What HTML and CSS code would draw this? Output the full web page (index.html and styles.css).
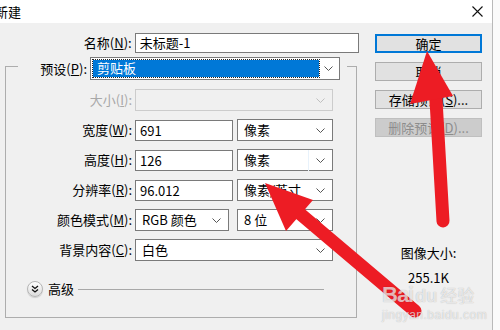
FILE: index.html
```html
<!DOCTYPE html>
<html lang="zh">
<head>
    <meta charset="UTF-8">
    <title>新建</title>
    <link rel="stylesheet" href="styles.css">
</head>
<body>

    <div class="window">
        <div class="titlebar">
            <span class="title">新建</span>
            <svg class="close" width="11" height="11" viewBox="0 0 11 11">
                <path d="M0.5 0.5 L10.5 10.5 M10.5 0.5 L0.5 10.5" stroke="#111" stroke-width="1.1" fill="none"/>
            </svg>
        </div>

        <div class="content">
            <div class="form">
                <div class="name-row">
                    <label class="lbl">名称(<u>N</u>):</label>
                    <div class="text-input wide">未标题-1</div>
                </div>

                <div class="group">
                    <div class="preset-row">
                        <label class="lbl preset-lbl">预设(<u>P</u>):</label>
                        <div class="select preset">
                            <span class="sel-focus">剪贴板</span>
                            <svg class="chev" width="9" height="5"><polyline points="0.5,0.5 4.5,4.5 8.5,0.5"/></svg>
                        </div>
                    </div>

                    <div class="row first">
                        <label class="lbl disabled">大小(<u>I</u>):</label>
                        <div class="select full off">
                            <span></span>
                            <svg class="chev" width="9" height="5"><polyline points="0.5,0.5 4.5,4.5 8.5,0.5"/></svg>
                        </div>
                    </div>

                    <div class="row">
                        <label class="lbl">宽度(<u>W</u>):</label>
                        <div class="text-input num">691</div>
                        <div class="select unit">
                            <span>像素</span>
                            <svg class="chev" width="9" height="5"><polyline points="0.5,0.5 4.5,4.5 8.5,0.5"/></svg>
                        </div>
                    </div>

                    <div class="row">
                        <label class="lbl">高度(<u>H</u>):</label>
                        <div class="text-input num">126</div>
                        <div class="select unit hover">
                            <span>像素</span>
                            <svg class="chev" width="9" height="5"><polyline points="0.5,0.5 4.5,4.5 8.5,0.5"/></svg>
                        </div>
                    </div>

                    <div class="row">
                        <label class="lbl">分辨率(<u>R</u>):</label>
                        <div class="text-input num">96.012</div>
                        <div class="select unit">
                            <span>像素/英寸</span>
                            <svg class="chev" width="9" height="5"><polyline points="0.5,0.5 4.5,4.5 8.5,0.5"/></svg>
                        </div>
                    </div>

                    <div class="row">
                        <label class="lbl">颜色模式(<u>M</u>):</label>
                        <div class="select mode">
                            <span>RGB 颜色</span>
                            <svg class="chev" width="9" height="5"><polyline points="0.5,0.5 4.5,4.5 8.5,0.5"/></svg>
                        </div>
                        <div class="select unit">
                            <span>8 位</span>
                            <svg class="chev" width="9" height="5"><polyline points="0.5,0.5 4.5,4.5 8.5,0.5"/></svg>
                        </div>
                    </div>

                    <div class="row">
                        <label class="lbl">背景内容(<u>C</u>):</label>
                        <div class="select full">
                            <span>白色</span>
                            <svg class="chev" width="9" height="5"><polyline points="0.5,0.5 4.5,4.5 8.5,0.5"/></svg>
                        </div>
                    </div>

                    <div class="advanced">
                        <span class="adv-btn">
                            <svg width="8" height="8" viewBox="0 0 8 8">
                                <polyline points="1,1 4,3.5 7,1" />
                                <polyline points="1,4.5 4,7 7,4.5" />
                            </svg>
                        </span>
                        <span class="adv-text">高级</span>
                        <span class="adv-line"></span>
                    </div>
                </div>
            </div>

            <div class="side">
                <div class="btn default">确定</div>
                <div class="btn">取消</div>
                <div class="btn">存储预设(<u>S</u>)...</div>
                <div class="btn off">删除预设(<u>D</u>)...</div>

                <div class="size-info">
                    <div>图像大小:</div>
                    <div class="size-val">255.1K</div>
                </div>
            </div>
        </div>
    </div>

    <!-- red marks drawn on top of the screenshot -->
    <svg class="marks" width="500" height="330" viewBox="0 0 500 330">
        <line x1="443" y1="221" x2="436" y2="100" stroke="#ed1c24" stroke-width="13" stroke-linecap="round"/>
        <polygon points="427,51 410,104 453,96" fill="#ed1c24"/>
        <line x1="415" y1="311" x2="298" y2="212" stroke="#ed1c24" stroke-width="13" stroke-linecap="round"/>
        <polygon points="265,183 313,200 286,231" fill="#ed1c24"/>
    </svg>

    <div class="watermark">
        <div class="wm-top"><span class="wm-bai">Bai</span><span class="wm-du">du</span><span class="wm-cn">经验</span></div>
        <div class="wm-url">jingyan.baidu.com</div>
    </div>

</body>
</html>
```

FILE: styles.css
```css
body {
    margin: 0;
    width: 500px;
    height: 330px;
    overflow: hidden;
    position: relative;
    background-color: #fafafa;
    font-family: "Noto Sans CJK SC", "Noto Sans", sans-serif;
    font-size: 13px;
    color: #000;
}
u {
    text-decoration: underline;
    text-underline-offset: 1px;
}
.window {
    width: 492px;
    height: 330px;
    background-color: #f0f0f0;
    border-right: 1px solid #b9b9b9;
}
.titlebar {
    height: 23px;
    background-color: #fff;
    display: flex;
    align-items: center;
    justify-content: space-between;
}
.title {
    margin-left: -5px;
    line-height: 16px;
}
.close {
    margin-right: 9px;
}
.content {
    display: flex;
    padding-top: 10px;
}
.form {
    width: 354px;
    padding-left: 5px;
}
.lbl {
    text-align: right;
    line-height: 16px;
    white-space: nowrap;
}
.lbl.disabled {
    color: #a8a8a8;
}
.name-row {
    display: flex;
    align-items: center;
    height: 20px;
}
.name-row .lbl {
    width: 127px;
    margin-right: 3px;
}
.text-input {
    box-sizing: border-box;
    height: 20px;
    line-height: 18px;
    padding-left: 4px;
    background-color: #fff;
    border: 1px solid #7a7a7a;
    white-space: nowrap;
}
.text-input.wide {
    width: 225px;
}
.text-input.num {
    width: 98px;
    height: 21px;
    line-height: 19px;
}
.group {
    box-sizing: border-box;
    width: 352px;
    height: 252px;
    margin-top: 13px;
    border: 1px solid #adadad;
}
.preset-row {
    display: flex;
    align-items: center;
    width: 329px;
    height: 23px;
    margin: -10px 0 0 12px;
    background-color: #f0f0f0;
}
.preset-lbl {
    width: 69px;
    margin-right: 3px;
}
.select {
    box-sizing: border-box;
    height: 22px;
    display: flex;
    align-items: center;
    justify-content: space-between;
    padding: 0 7px 0 6px;
    background-color: #fff;
    border: 1px solid #7a7a7a;
    line-height: 16px;
    white-space: nowrap;
}
.chev {
    flex: none;
    fill: none;
    stroke: #555;
    stroke-width: 1;
}
.select.preset {
    width: 250px;
    height: 23px;
    padding: 0 6px 0 2px;
}
.sel-focus {
    box-sizing: border-box;
    width: 226px;
    height: 17px;
    line-height: 15px;
    padding-left: 4px;
    color: #fff;
    background-color: #0078d7;
    outline: 1px dotted #222;
}
.select.full {
    width: 198px;
}
.select.off {
    background-color: #f0f0f0;
    border-color: #cccccc;
}
.select.off .chev {
    stroke: #bfbfbf;
}
.select.unit {
    width: 96px;
    margin-left: 4px;
}
.select.mode {
    width: 94px;
    margin-right: 4px;
}
.select.hover .chev {
    box-sizing: content-box;
    padding: 8px 0 8px 7px;
    border-left: 1px solid #e8f2fb;
}
.row {
    display: flex;
    align-items: center;
    height: 22px;
    margin-top: 8px;
}
.row.first {
    margin-top: 9px;
}
.row .lbl {
    width: 126px;
    margin-right: 3px;
}
.advanced {
    display: flex;
    align-items: center;
    height: 16px;
    margin: 20px 32px 0 21px;
}
.adv-btn {
    box-sizing: border-box;
    width: 16px;
    height: 16px;
    border-radius: 50%;
    border: 1px solid #b5b5b5;
    background: linear-gradient(#ffffff, #dcdcdc);
    box-shadow: 0 1px 1px rgba(0,0,0,0.15);
    display: flex;
    align-items: center;
    justify-content: center;
}
.adv-btn svg {
    fill: none;
    stroke: #111;
    stroke-width: 1.3;
}
.adv-text {
    margin-left: 5px;
    line-height: 16px;
}
.adv-line {
    flex: 1;
    height: 1px;
    margin-left: 4px;
    background-color: #a8a8a8;
}
.side {
    width: 107px;
    margin-left: 16px;
    padding-top: 1px;
}
.btn {
    box-sizing: border-box;
    height: 19px;
    margin-bottom: 9px;
    text-align: center;
    line-height: 17px;
    background-color: #e1e1e1;
    border: 1px solid #adadad;
    white-space: nowrap;
}
.btn.default {
    border: 2px solid #0078d7;
    line-height: 15px;
}
.btn.off {
    background-color: #cccccc;
    border-color: #bfbfbf;
    color: #8c8c8c;
}
.size-info {
    margin-top: 108px;
    text-align: center;
    line-height: 16px;
}
.size-val {
    margin-top: 9px;
}
.marks {
    position: absolute;
    left: 0;
    top: 0;
    pointer-events: none;
}
.watermark {
    position: absolute;
    left: 382px;
    top: 284px;
    color: rgba(255,255,255,0.7);
    text-shadow: 0 0 1px rgba(0,0,0,0.3);
    font-family: "Liberation Sans", "Noto Sans CJK SC", sans-serif;
}
.wm-top {
    display: flex;
    align-items: baseline;
    line-height: 22px;
}
.wm-bai {
    font-size: 22px;
    font-weight: bold;
    letter-spacing: -1px;
}
.wm-du {
    font-size: 18px;
    font-weight: bold;
    margin-left: 2px;
}
.wm-cn {
    font-size: 17px;
    margin-left: 3px;
    font-family: "Noto Sans CJK SC", sans-serif;
}
.wm-url {
    font-size: 12px;
    line-height: 14px;
    margin-top: 1px;
    letter-spacing: 0.5px;
}
```
